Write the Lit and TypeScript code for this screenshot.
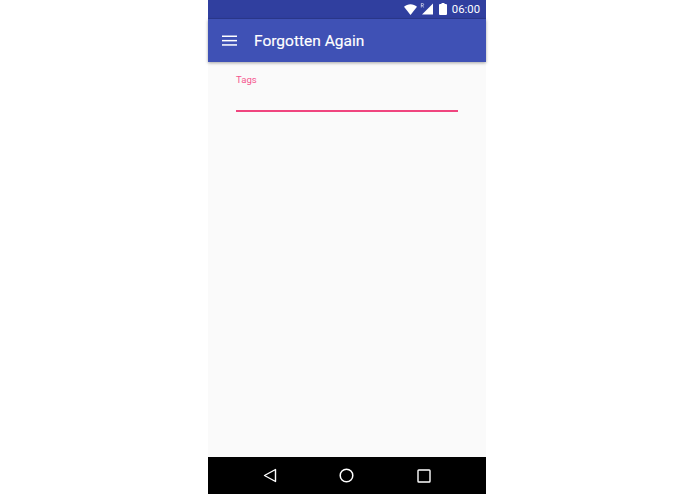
import { LitElement, html, css } from "lit";
import { customElement } from "lit/decorators.js";

@customElement("app-root")
export class AppRoot extends LitElement {
  static styles = css`
    :host { display: block; width: 695px; height: 494px; background: #fff; font-family: Roboto, "Liberation Sans", sans-serif; overflow: hidden; }
    .phone { width: 278px; height: 494px; margin-left: 208px; display: flex; flex-direction: column; background: #fafafa; }
    .status { height: 18px; flex: none; background: #303f9f; border-bottom: 1px solid #2c3a92; display: flex; align-items: center; justify-content: flex-end; padding-right: 6px; color: #fff; font-size: 11.3px; font-weight: 400; }
    .status svg { display: block; }
    .batt { margin-left: 6px; margin-right: 5px; }
    .bar { height: 43px; flex: none; background: #3f51b5; display: flex; align-items: center; padding-left: 14px; gap: 17px; color: #fff; box-shadow: 0 1px 3px rgba(0,0,0,.35); position: relative; }
    .title { font-size: 15.5px; font-weight: 400; -webkit-text-stroke: 0.15px #fff; }
    .menu { display: block; }
    .content { flex: 1; padding: 11px 28px 0; }
    .label { font-size: 9.6px; line-height: 13px; color: #f5568f; }
    .line { height: 2px; background: #f0457f; margin-top: 24px; }
    .nav { height: 37px; flex: none; background: #000; display: flex; align-items: center; }
    .nav svg { display: block; }
    .nav .back { margin-left: 55px; }
    .nav .home { margin-left: 62px; }
    .nav .recent { margin-left: 63px; }
  `;

  render() {
    return html`
      <div class="phone">
        <div class="status">
          <svg width="13" height="11" viewBox="0 0 13 11"><path d="M0 2.8 C3.5 -0.7 9.5 -0.7 13 2.8 L6.5 11 Z" fill="#fff"/></svg>
          <svg width="16" height="12" viewBox="0 0 16 12">
            <path d="M16 0.5 V11.5 H5 Z" fill="#fff"/>
            <path d="M4.3 0.5 V4.5 M4.3 0.5 H5.6 A1 1 0 0 1 5.6 2.6 H4.3 M5.5 2.6 L6.6 4.5" fill="none" stroke="#fff" stroke-width=".6"/>
          </svg>
          <svg class="batt" width="8" height="12" viewBox="0 0 8 12"><path d="M2.5 0 H5.5 V1 H7 Q8 1 8 2 V11 Q8 12 7 12 H1 Q0 12 0 11 V2 Q0 1 1 1 H2.5 Z" fill="#fff"/></svg>
          <span>06:00</span>
        </div>
        <div class="bar">
          <svg class="menu" width="15" height="12" viewBox="0 0 15 12" fill="#fff"><rect y="0.5" width="15" height="1.5"/><rect y="4.9" width="15" height="1.5"/><rect y="9.2" width="15" height="1.5"/></svg>
          <span class="title">Forgotten Again</span>
        </div>
        <div class="content">
          <div class="label">Tags</div>
          <div class="line"></div>
        </div>
        <div class="nav">
          <svg class="back" width="14" height="15" viewBox="0 0 14 15"><path d="M12.5 1.5 V13.5 L1.5 7.5 Z" fill="none" stroke="#fff" stroke-width="1.4" stroke-linejoin="round"/></svg>
          <svg class="home" width="15" height="15" viewBox="0 0 15 15"><circle cx="7.5" cy="7.5" r="6.3" fill="none" stroke="#fff" stroke-width="1.5"/></svg>
          <svg class="recent" width="14" height="14" viewBox="0 0 14 14"><rect x="1" y="1" width="12" height="12" rx="0.8" fill="none" stroke="#fff" stroke-width="1.4"/></svg>
        </div>
      </div>
    `;
  }
}
